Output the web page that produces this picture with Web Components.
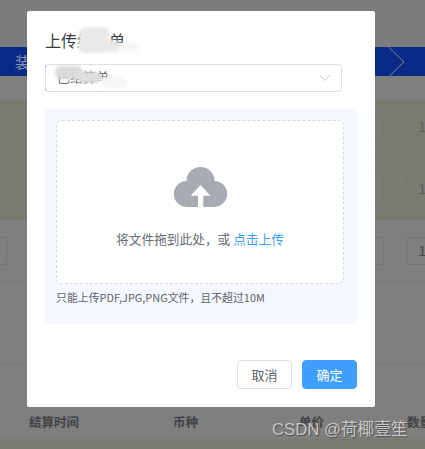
<!DOCTYPE html>
<html lang="zh"><head><meta charset="utf-8"><style>
html,body{margin:0;padding:0;height:449px;overflow:hidden}
body{font-family:"Liberation Sans","Noto Sans CJK SC",sans-serif;background:#7f7f7f}
</style></head><body>
<bg-page></bg-page>
<upload-dialog></upload-dialog>
<water-mark>CSDN @荷椰壹笙</water-mark>
<script>
const def=(name,html,init)=>customElements.define(name,class extends HTMLElement{
  constructor(){super();this.attachShadow({mode:'open'}).innerHTML=html;}
  connectedCallback(){init&&init(this);}
});
def('qty-row',`<style>
:host{display:flex;height:62px;box-sizing:border-box;border-bottom:1px solid #747678;align-items:center;background:var(--bg,#7f7f7f);padding-top:1px;overflow:hidden}
:host(.first){height:58px;padding-top:0;padding-bottom:3px}
.b{box-sizing:border-box;height:28px;border:1px solid #737476;border-radius:3px;background:transparent;font-size:15px;color:var(--num,#5c5f62);line-height:26px;flex:none}
.l{width:7px;border-left:0;border-radius:0 3px 3px 0}
.c{width:40px;margin-left:337px}
.r{width:40px;margin-left:22px;padding-left:11px}
</style><div class="b l"></div><div class="b c"></div><div class="b r">1</div>`);
def('bg-page',`<style>
:host{display:block;height:449px;background:#7f7f7f;overflow:hidden}
.top{height:47px;background:#7b7c7d}
.bar{height:29px;background:#0a2a87;display:flex;align-items:center;justify-content:space-between;color:#8d96ad;font-size:15px;padding-left:15px;overflow:hidden}
.bar svg{display:block;margin-right:20px}
.gap{height:24px}
.ol{--bg:#797b70}
.gr{--bg:#7f7f7f;--num:#45484b}
.sp{height:81px;border-bottom:1px solid #747678}
.th{height:75px;padding-top:39px;display:grid;grid-template-columns:29px 144px 126px 108px 1fr;align-items:center;font-size:12.500px;font-weight:700;color:#404245;white-space:nowrap;overflow:hidden;box-sizing:border-box}
.foot{height:10px;background:#7a7b70}
</style>
<div class="top"></div>
<div class="bar"><span>装</span><svg width="17" height="30" viewBox="0 0 17 30"><path d="M.5 0 L16 15 L.5 30" fill="none" stroke="#7c86a2" stroke-width="1"/></svg></div>
<div class="gap"></div>
<qty-row class="ol first"></qty-row><qty-row class="ol"></qty-row><qty-row class="gr"></qty-row>
<div class="sp"></div>
<div class="th"><span></span><span>结算时间</span><span>币种</span><span>单价</span><span>数量</span></div>
<div class="foot"></div>`);
def('up-cloud',`<style>:host{display:block;width:53px;height:40px}svg{display:block}</style>
<svg width="53" height="40" viewBox="0 0 53 40"><path fill="#a8abb2" d="M13 40A13 13 0 0 1 12.500 14A14 14 0 0 1 40.500 14A13 13 0 0 1 40 40H29.300V28.700H36.300L26.500 18L16.700 28.700H24V40Z"/></svg>`);
def('upload-dialog',`<style>
:host{position:absolute;left:27px;top:11px;width:348px;height:396px;background:#fff;border-radius:2px;box-sizing:border-box;padding:18px;display:flex;flex-direction:column;font-family:"Noto Sans CJK SC","Liberation Sans",sans-serif}
.title{font-size:16px;line-height:22px;color:#3a3b3d;height:22px}
.sel{position:relative;margin-top:13px;width:297px;height:28px;box-sizing:border-box;border:1px solid #dcdfe6;border-radius:4px;display:flex;align-items:center;justify-content:space-between;padding:0 10px 0 11px;font-size:13px;color:#606266}
.sel span{position:relative;top:-2px}
.sel svg{display:block}
.sel::before,.sel::after{content:"";position:absolute;left:-1px;width:1px;height:3px;background:#a9c9f2}
.sel::before{top:0}.sel::after{bottom:0}
.panel{margin-top:17px;width:312px;height:215px;box-sizing:border-box;background:#f5f8ff;padding:11px 13px 0 11px}
.drop{height:164px;box-sizing:border-box;border:1px dashed #d5d8e2;border-radius:6px;background:#fff;display:flex;flex-direction:column;align-items:center;padding-top:46px}
.txt{margin-top:23px;font-size:12.700px;line-height:18px;color:#696b70;white-space:nowrap}
.txt em{font-style:normal;color:#409eff}
.hint{margin-top:5px;font-size:10.900px;line-height:16px;color:#606266;white-space:nowrap}
.foot{margin-top:auto;display:flex;justify-content:flex-end;gap:10px;width:312px}
button{width:55px;height:29px;box-sizing:border-box;border-radius:4px;font:13px "Noto Sans CJK SC",sans-serif;border:1px solid #dcdfe6;background:#fff;color:#606266;padding:0}
.p{background:#409eff;border-color:#409eff;color:#fff}
.s{position:absolute;background:#e9e9e9;filter:blur(1.500px);border-radius:6px}
.f{background:#f5f5f5}
</style>
<div class="title">上传结算单</div>
<div class="sel"><span>已结算单</span><svg width="12" height="8" viewBox="0 0 12 8"><path d="M.5 1 6 6.500 11.500 1" fill="none" stroke="#c0c4cc" stroke-width="1"/></svg></div>
<div class="panel"><div class="drop"><up-cloud></up-cloud><div class="txt">将文件拖到此处，或 <em>点击上传</em></div></div><div class="hint">只能上传PDF,JPG,PNG文件，且不超过10M</div></div>
<div class="foot"><button>取消</button><button class="p">确定</button></div>
<div class="s" style="left:52px;top:16px;width:30px;height:25px"></div>
<div class="s" style="left:51px;top:29px;width:42px;height:12px"></div>
<div class="s f" style="left:91px;top:32px;width:20px;height:9px"></div>
<div class="s" style="left:28px;top:55px;width:28px;height:13px;background:#dadada"></div>
<div class="s" style="left:50px;top:61px;width:24px;height:11px;background:#dedede"></div>
<div class="s f" style="left:72px;top:66px;width:28px;height:11px"></div>`);
def('water-mark',`<style>:host{position:absolute;left:272px;top:419px;font:16.700px/22px "Liberation Sans","Noto Sans CJK SC",sans-serif;color:#c9c9c9;text-shadow:1px 1px 1px #4a4a4a;white-space:nowrap}</style><slot></slot>`);
</script></body></html>
